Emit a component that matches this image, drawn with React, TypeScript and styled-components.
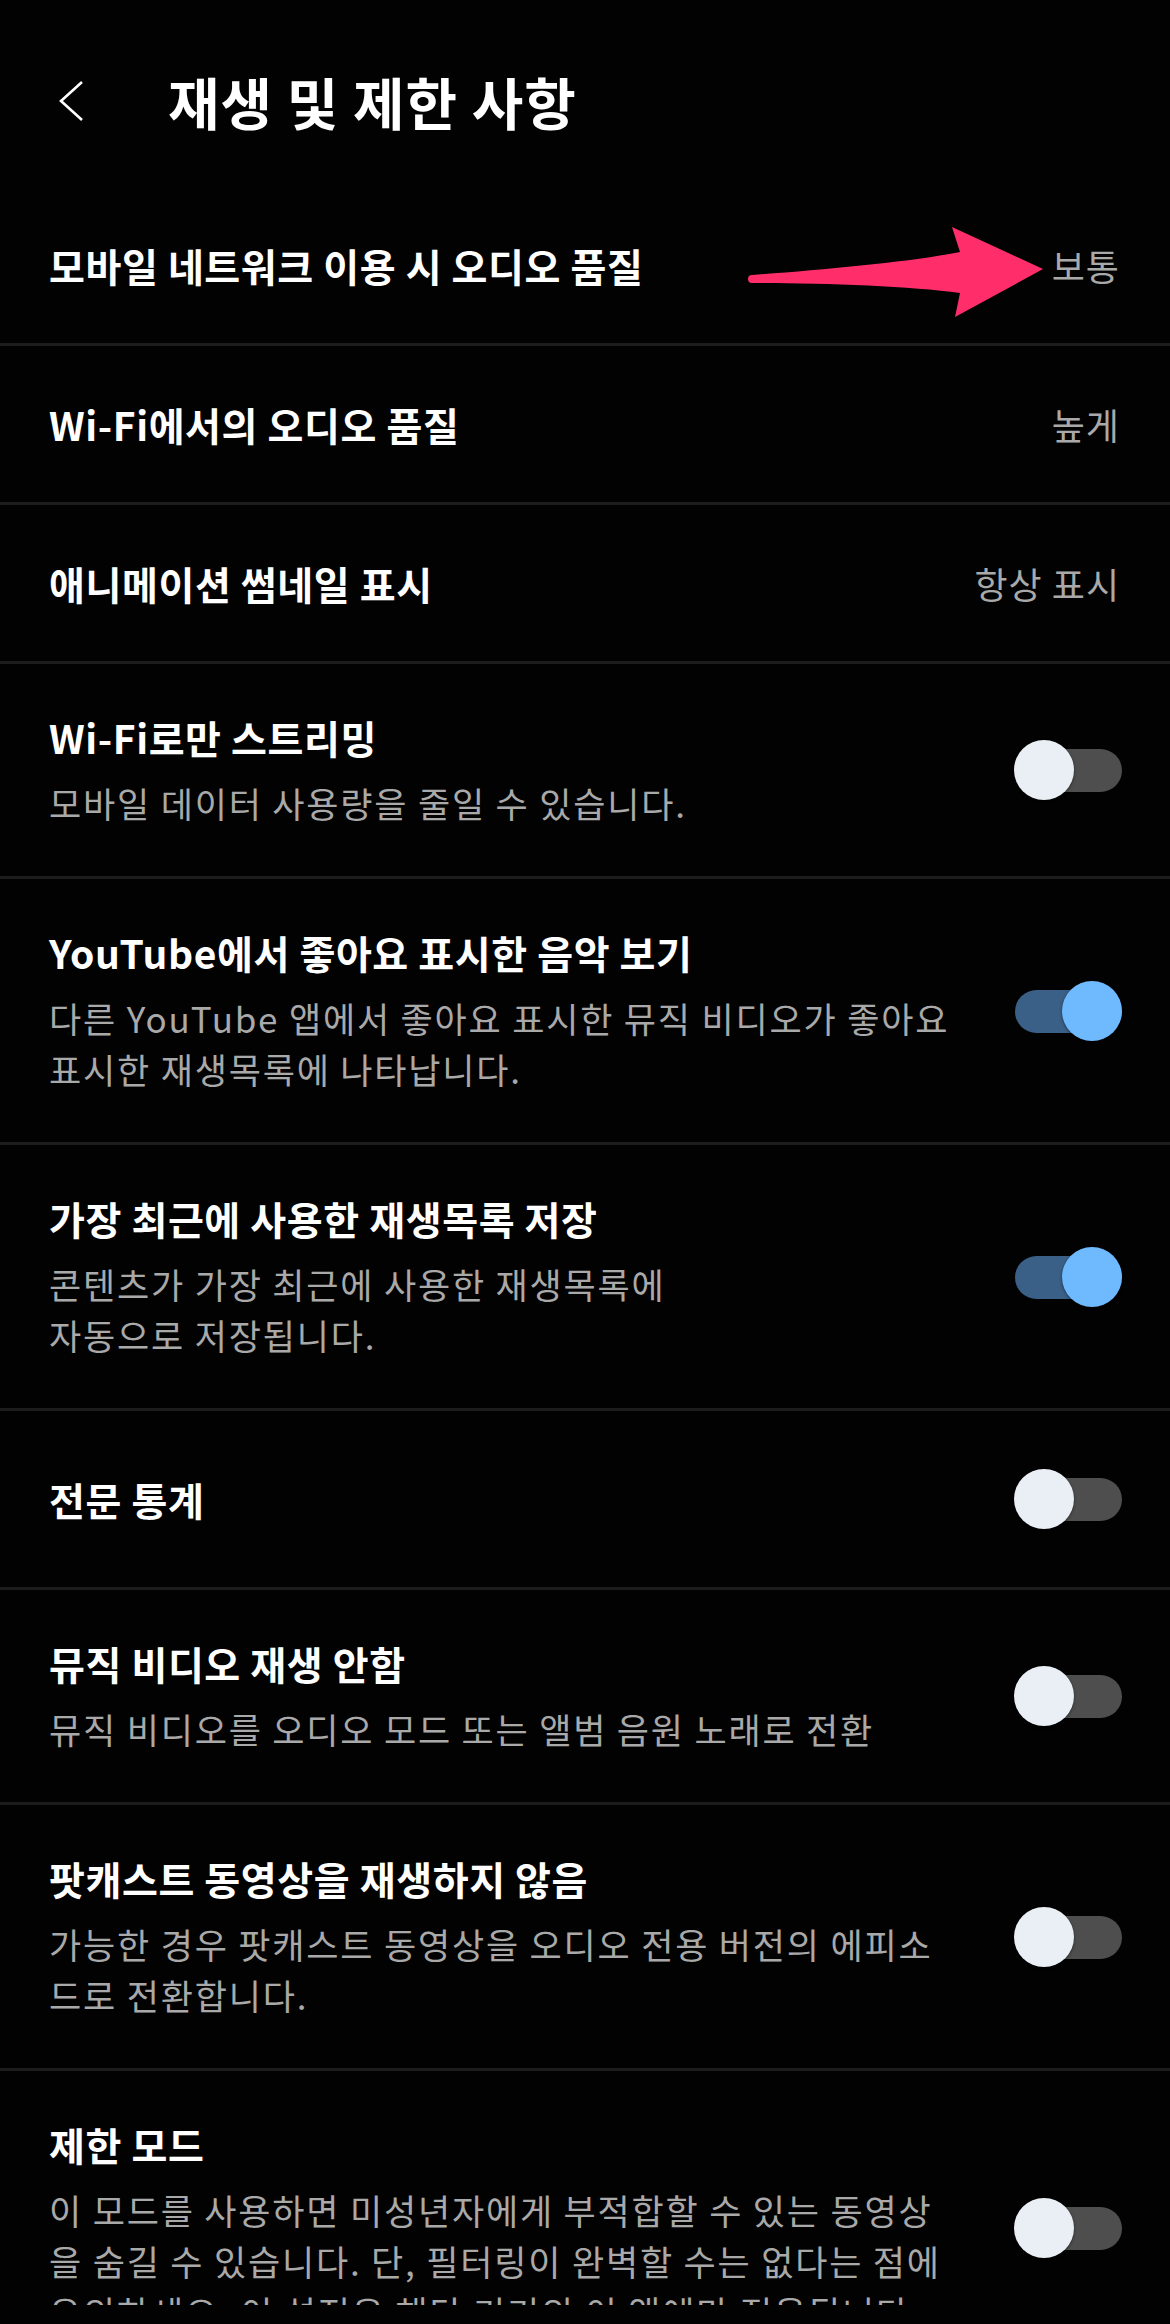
import React from "react";
import styled, { createGlobalStyle } from "styled-components";

type ValueSetting = {
  kind: "value";
  title: string;
  value: string;
};

type ToggleSetting = {
  kind: "toggle";
  title: string;
  lines: string[];
  isOn: boolean;
};

type Setting = ValueSetting | ToggleSetting;

const Colors = {
  BACKGROUND: "#020202",
  DIVIDER: "#1c1c1c",
  TITLE: "#ffffff",
  SUBTITLE: "#a9a9a9",
  VALUE: "#a9a9a9",
  TRACK_OFF: "#4e4e4e",
  KNOB_OFF: "#eaeff6",
  TRACK_ON: "#3a6088",
  KNOB_ON: "#6fbaff",
  ARROW: "#ff2e6b",
};

const FONT_STACK = `"Noto Sans CJK KR", "Noto Sans", sans-serif`;

const SETTINGS: Setting[] = [
  { kind: "value", title: "모바일 네트워크 이용 시 오디오 품질", value: "보통" },
  { kind: "value", title: "Wi-Fi에서의 오디오 품질", value: "높게" },
  { kind: "value", title: "애니메이션 썸네일 표시", value: "항상 표시" },
  {
    kind: "toggle",
    title: "Wi-Fi로만 스트리밍",
    lines: ["모바일 데이터 사용량을 줄일 수 있습니다."],
    isOn: false,
  },
  {
    kind: "toggle",
    title: "YouTube에서 좋아요 표시한 음악 보기",
    lines: [
      "다른 YouTube 앱에서 좋아요 표시한 뮤직 비디오가 좋아요",
      "표시한 재생목록에 나타납니다.",
    ],
    isOn: true,
  },
  {
    kind: "toggle",
    title: "가장 최근에 사용한 재생목록 저장",
    lines: ["콘텐츠가 가장 최근에 사용한 재생목록에", "자동으로 저장됩니다."],
    isOn: true,
  },
  { kind: "toggle", title: "전문 통계", lines: [], isOn: false },
  {
    kind: "toggle",
    title: "뮤직 비디오 재생 안함",
    lines: ["뮤직 비디오를 오디오 모드 또는 앨범 음원 노래로 전환"],
    isOn: false,
  },
  {
    kind: "toggle",
    title: "팟캐스트 동영상을 재생하지 않음",
    lines: [
      "가능한 경우 팟캐스트 동영상을 오디오 전용 버전의 에피소",
      "드로 전환합니다.",
    ],
    isOn: false,
  },
  {
    kind: "toggle",
    title: "제한 모드",
    lines: [
      "이 모드를 사용하면 미성년자에게 부적합할 수 있는 동영상",
      "을 숨길 수 있습니다. 단, 필터링이 완벽할 수는 없다는 점에",
      "유의하세요. 이 설정은 해당 기기의 이 앱에만 적용됩니다.",
    ],
    isOn: false,
  },
];

const GlobalStyle = createGlobalStyle`
  html, body {
    margin: 0;
    padding: 0;
    background: ${Colors.BACKGROUND};
  }
  * {
    box-sizing: border-box;
  }
`;

const Screen = styled.div`
  position: relative;
  width: 1170px;
  height: 2324px;
  overflow: hidden;
  background: ${Colors.BACKGROUND};
  font-family: ${FONT_STACK};
  display: flex;
  flex-direction: column;
`;

const Header = styled.header`
  display: flex;
  align-items: center;
  height: 187px;
  padding: 66px 0 51px 56px;
`;

const BackButton = styled.button`
  display: flex;
  align-items: center;
  justify-content: center;
  width: 32px;
  height: 44px;
  padding: 0;
  margin-right: 80px;
  border: none;
  background: transparent;
`;

const Title = styled.h1`
  margin: 0;
  color: ${Colors.TITLE};
  font-size: 56px;
  font-weight: 600;
  line-height: 70px;
  letter-spacing: 1px;
`;

const List = styled.div`
  height: 2118px;
  overflow: hidden;
  flex: none;
`;

const Row = styled.div<{ $compact?: boolean }>`
  display: flex;
  align-items: center;
  justify-content: space-between;
  gap: 40px;
  min-height: ${(p) => (p.$compact ? 159 : 179)}px;
  padding: ${(p) => (p.$compact ? "0 50px 0 49px" : "48px 48px 48px 49px")};
  border-bottom: 3px solid ${Colors.DIVIDER};
`;

const TextColumn = styled.div`
  display: flex;
  flex-direction: column;
  gap: 15px;
  min-width: 0;
`;

const RowTitle = styled.div`
  color: ${Colors.TITLE};
  font-size: 39px;
  font-weight: 600;
  line-height: 50px;
  letter-spacing: 0.6px;
  white-space: nowrap;
`;

const Description = styled.div`
  display: flex;
  flex-direction: column;
`;

const DescriptionLine = styled.span`
  color: ${Colors.SUBTITLE};
  font-size: 35px;
  font-weight: 400;
  line-height: 51px;
  letter-spacing: 1.8px;
  white-space: nowrap;
`;

const Value = styled.span`
  color: ${Colors.VALUE};
  font-size: 36px;
  line-height: 48px;
  letter-spacing: 1px;
  white-space: nowrap;
`;

const SwitchBox = styled.div`
  position: relative;
  flex: none;
  width: 108px;
  height: 60px;
`;

const Track = styled.div<{ $on: boolean }>`
  position: absolute;
  left: 1px;
  right: 0;
  top: 9px;
  height: 43px;
  border-radius: 22px;
  background: ${(p) => (p.$on ? Colors.TRACK_ON : Colors.TRACK_OFF)};
`;

const Knob = styled.div<{ $on: boolean }>`
  position: absolute;
  top: 0;
  left: ${(p) => (p.$on ? 48 : 0)}px;
  width: 60px;
  height: 60px;
  border-radius: 50%;
  background: ${(p) => (p.$on ? Colors.KNOB_ON : Colors.KNOB_OFF)};
  box-shadow: 0 1px 3px rgba(0, 0, 0, 0.5);
`;

const Annotation = styled.svg`
  position: absolute;
  left: 740px;
  top: 210px;
  pointer-events: none;
`;

function Switch({ isOn }: { isOn: boolean }) {
  return (
    <SwitchBox>
      <Track $on={isOn} />
      <Knob $on={isOn} />
    </SwitchBox>
  );
}

function SettingRow({ setting }: { setting: Setting }) {
  if (setting.kind === "value") {
    return (
      <Row $compact>
        <RowTitle>{setting.title}</RowTitle>
        <Value>{setting.value}</Value>
      </Row>
    );
  }

  return (
    <Row>
      <TextColumn>
        <RowTitle>{setting.title}</RowTitle>
        {setting.lines.length > 0 && (
          <Description>
            {setting.lines.map((line) => (
              <DescriptionLine key={line}>{line}</DescriptionLine>
            ))}
          </Description>
        )}
      </TextColumn>
      <Switch isOn={setting.isOn} />
    </Row>
  );
}

export default function App() {
  return (
    <>
      <GlobalStyle />
      <Screen>
        <Header>
          <BackButton type="button" aria-label="뒤로">
            <svg width="28" height="44" viewBox="0 0 28 44">
              <polyline
                points="24,3 3,22 24,41"
                fill="none"
                stroke="#ffffff"
                strokeWidth="2.6"
              />
            </svg>
          </BackButton>
          <Title>재생 및 제한 사항</Title>
        </Header>
        <List>
          {SETTINGS.map((setting) => (
            <SettingRow key={setting.title} setting={setting} />
          ))}
        </List>
        {/* pink call-out arrow pointing at the mobile quality value */}
        <Annotation width="320" height="120" viewBox="0 0 320 120">
          <path
            d="M 12 65 C 80 60, 170 52, 220 42 L 212 17 L 303 59 L 215 107 L 220 83 C 170 76, 80 73, 12 73 A 4 4 0 0 1 12 65 Z"
            fill={Colors.ARROW}
          />
        </Annotation>
      </Screen>
    </>
  );
}
